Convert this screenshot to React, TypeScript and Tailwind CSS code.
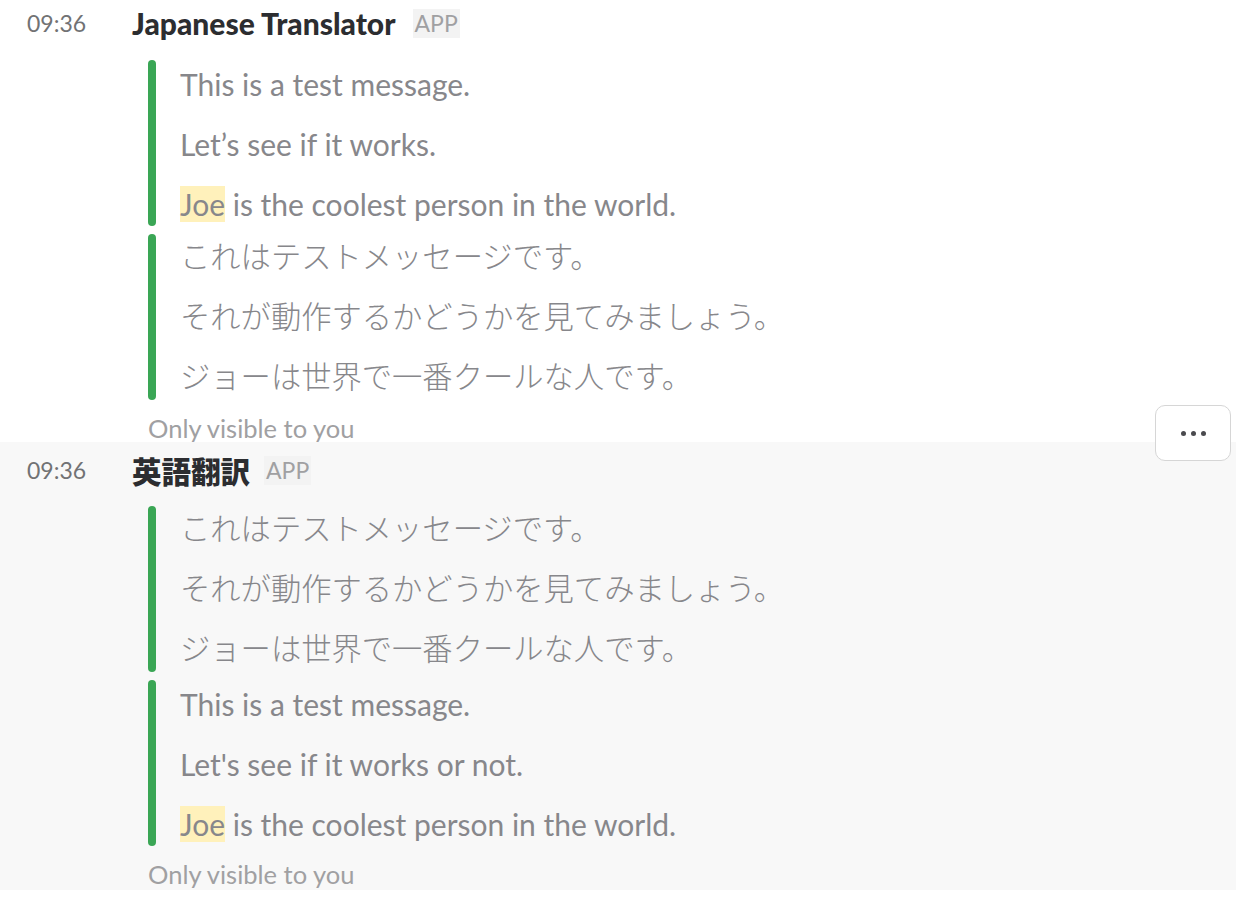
import React from "react";

const EN = "font-['Lato','Noto_Sans_CJK_JP',sans-serif]";

function Line({ children, jp }: { children: React.ReactNode; jp?: boolean }) {
  return (
    <div
      className={
        jp
          ? "text-[30.3px] leading-[36px] text-[#87878b] font-['Noto_Sans_CJK_JP',sans-serif] font-light whitespace-nowrap -mt-[3px] mb-[3px]"
          : `text-[30px] leading-[36px] text-[#87878b] ${EN} whitespace-nowrap`
      }
    >
      {children}
    </div>
  );
}

function Joe() {
  return <span className="bg-[#fff1bb]">Joe</span>;
}

function Block({ children }: { children: React.ReactNode }) {
  return (
    <div className="flex ml-[16px]">
      <div className="w-[8px] rounded-full bg-[#3aa655] shrink-0" />
      <div className="flex flex-col gap-[24px] pt-[6px] pb-[4px] pl-[24px]">{children}</div>
    </div>
  );
}

function Header({ name, cjk }: { name: string; cjk?: boolean }) {
  return (
    <div className="flex items-center h-[36px]">
      <div className={`w-[132px] pl-[27px] text-[23px] text-[#717274] ${EN}`}>09:36</div>
      <div
        className={
          cjk
            ? "text-[29.5px] font-black text-[#2c2d30] font-['Noto_Sans_CJK_JP',sans-serif] leading-[36px]"
            : `text-[30px] font-black text-[#2c2d30] ${EN} leading-[36px]`
        }
      >
        {name}
      </div>
      <div className={`${cjk ? "ml-[14px]" : "ml-[17px]"} h-[29px] px-[2px] bg-[#f3f3f3] text-[23px] leading-[29px] text-[#a0a0a2] ${EN}`}>APP</div>
    </div>
  );
}

const EnLines = ({ second }: { second: string }) => (
  <Block>
    <Line>This is a test message.</Line>
    <Line>{second}</Line>
    <Line>
      <Joe /> is the coolest person in the world.
    </Line>
  </Block>
);

const JpLines = () => (
  <Block>
    <Line jp>これはテストメッセージです。</Line>
    <Line jp>それが動作するかどうかを見てみましょう。</Line>
    <Line jp>ジョーは世界で一番クールな人です。</Line>
  </Block>
);

export default function App() {
  return (
    <div className="w-[1236px] h-[904px] bg-white overflow-hidden">
      <div className="pt-[5px]">
        <Header name="Japanese Translator" />
        <div className="pl-[132px] mt-[19px] flex flex-col gap-[8px]">
          <EnLines second="Let’s see if it works." />
          <JpLines />
        </div>
        <div className={`pl-[148px] mt-[14px] h-[28px] leading-[28px] text-[25.5px] text-[#a0a0a2] ${EN}`}>Only visible to you</div>
      </div>
      <div className="relative bg-[#f8f8f8] pt-[10px] pb-[2px]">
        <div className="absolute right-[5px] top-[-37px] w-[76px] h-[56px] bg-white border-[1.5px] border-[#d6d6d6] rounded-[10px] flex items-center justify-center gap-[5px]">
          <span className="w-[5px] h-[5px] rounded-full bg-[#4a4a4e]" />
          <span className="w-[5px] h-[5px] rounded-full bg-[#4a4a4e]" />
          <span className="w-[5px] h-[5px] rounded-full bg-[#4a4a4e]" />
        </div>
        <Header name="英語翻訳" cjk />
        <div className="pl-[132px] mt-[18px] flex flex-col gap-[8px]">
          <JpLines />
          <EnLines second="Let's see if it works or not." />
        </div>
        <div className={`pl-[148px] mt-[14px] h-[28px] leading-[28px] text-[25.5px] text-[#a0a0a2] ${EN}`}>Only visible to you</div>
      </div>
    </div>
  );
}
